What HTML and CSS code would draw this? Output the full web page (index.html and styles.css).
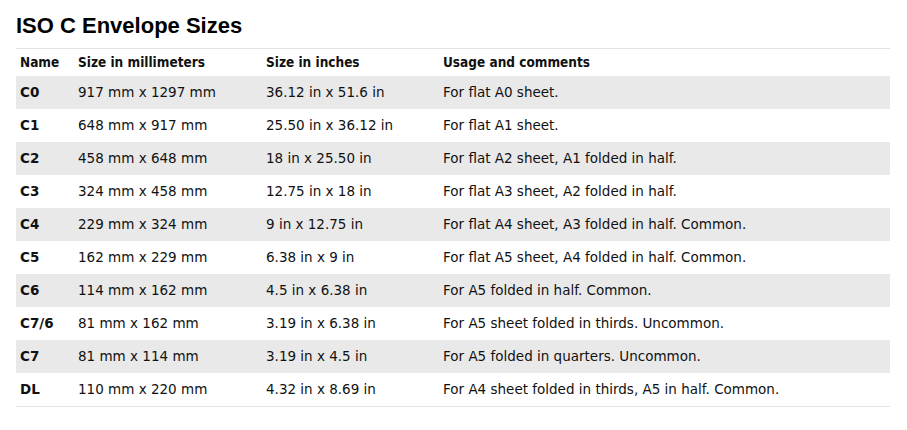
FILE: index.html
```html
<!DOCTYPE html>
<html lang="en">
<head>
<meta charset="utf-8">
<title>ISO C Envelope Sizes</title>
<link rel="stylesheet" href="styles.css">
</head>
<body>
<main class="page">
  <h1 class="title">ISO C Envelope Sizes</h1>
  <table class="sizes">
    <colgroup>
      <col class="c-name"><col class="c-mm"><col class="c-in"><col class="c-use">
    </colgroup>
    <thead>
      <tr><th>Name</th><th>Size in millimeters</th><th>Size in inches</th><th>Usage and comments</th></tr>
    </thead>
    <tbody>
      <tr><td class="name">C0</td><td>917 mm x 1297 mm</td><td>36.12 in x 51.6 in</td><td>For flat A0 sheet.</td></tr>
      <tr><td class="name">C1</td><td>648 mm x 917 mm</td><td>25.50 in x 36.12 in</td><td>For flat A1 sheet.</td></tr>
      <tr><td class="name">C2</td><td>458 mm x 648 mm</td><td>18 in x 25.50 in</td><td>For flat A2 sheet, A1 folded in half.</td></tr>
      <tr><td class="name">C3</td><td>324 mm x 458 mm</td><td>12.75 in x 18 in</td><td>For flat A3 sheet, A2 folded in half.</td></tr>
      <tr><td class="name">C4</td><td>229 mm x 324 mm</td><td>9 in x 12.75 in</td><td>For flat A4 sheet, A3 folded in half. Common.</td></tr>
      <tr><td class="name">C5</td><td>162 mm x 229 mm</td><td>6.38 in x 9 in</td><td>For flat A5 sheet, A4 folded in half. Common.</td></tr>
      <tr><td class="name">C6</td><td>114 mm x 162 mm</td><td>4.5 in x 6.38 in</td><td>For A5 folded in half. Common.</td></tr>
      <tr><td class="name">C7/6</td><td>81 mm x 162 mm</td><td>3.19 in x 6.38 in</td><td>For A5 sheet folded in thirds. Uncommon.</td></tr>
      <tr><td class="name">C7</td><td>81 mm x 114 mm</td><td>3.19 in x 4.5 in</td><td>For A5 folded in quarters. Uncommon.</td></tr>
      <tr><td class="name">DL</td><td>110 mm x 220 mm</td><td>4.32 in x 8.69 in</td><td>For A4 sheet folded in thirds, A5 in half. Common.</td></tr>
    </tbody>
  </table>
</main>
</body>
</html>
```
FILE: styles.css
```css
html, body {
  margin: 0;
  padding: 0;
  background: #ffffff;
}

.page {
  padding: 13px 17px 0 16px;
  color: #111111;
}

.title {
  margin: 0 0 9px 0;
  font-family: "Liberation Sans", Arial, sans-serif;
  font-weight: bold;
  font-size: 22px;
  line-height: 26px;
  color: #000000;
}

.sizes {
  width: 874px;
  border-collapse: collapse;
  table-layout: fixed;
  font-family: "DejaVu Sans", Verdana, sans-serif;
  font-size: 13.5px;
  line-height: 17px;
  color: #111111;
  border-top: 1px solid #e2e2e2;
  border-bottom: 1px solid #e2e2e2;
}

.c-name { width: 58px; }
.c-mm { width: 188px; }
.c-in { width: 177px; }

.sizes th {
  text-align: left;
  font-family: "DejaVu Sans Condensed", "DejaVu Sans", sans-serif;
  font-weight: bold;
  padding: 5px 4px;
}

.sizes td {
  padding: 8px 4px;
  white-space: nowrap;
}

.sizes td.name {
  font-weight: bold;
}

.sizes tbody tr:nth-child(odd) {
  background: #e9e9e9;
}
```
